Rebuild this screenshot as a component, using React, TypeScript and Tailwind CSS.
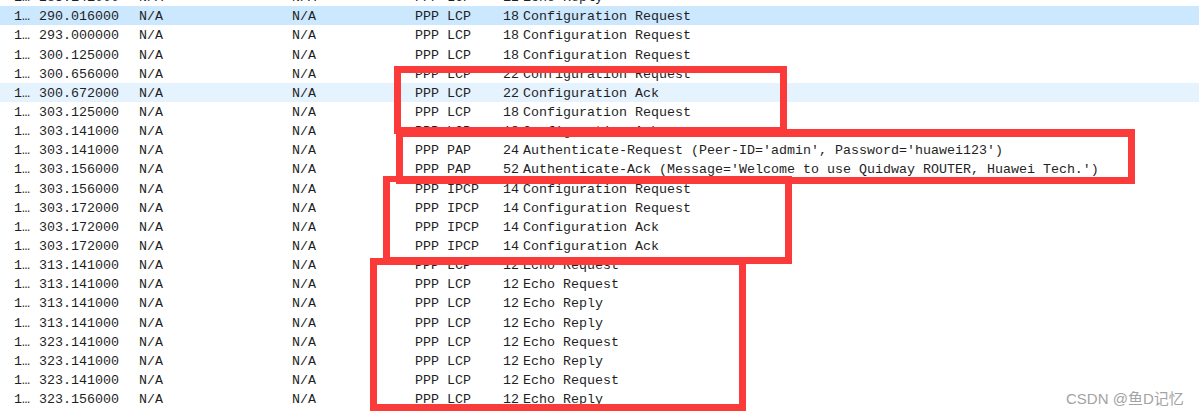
import React from "react";

type Row = { t: string; proto: string; len: string; info: string; bg?: string };

const rows: Row[] = [
  { t: "283.141000", proto: "PPP LCP", len: "12", info: "Echo Reply" },
  { t: "290.016000", proto: "PPP LCP", len: "18", info: "Configuration Request", bg: "bg-[#cce8ff]" },
  { t: "293.000000", proto: "PPP LCP", len: "18", info: "Configuration Request" },
  { t: "300.125000", proto: "PPP LCP", len: "18", info: "Configuration Request" },
  { t: "300.656000", proto: "PPP LCP", len: "22", info: "Configuration Request" },
  { t: "300.672000", proto: "PPP LCP", len: "22", info: "Configuration Ack", bg: "bg-[#e5f3ff]" },
  { t: "303.125000", proto: "PPP LCP", len: "18", info: "Configuration Request" },
  { t: "303.141000", proto: "PPP LCP", len: "18", info: "Configuration Ack" },
  { t: "303.141000", proto: "PPP PAP", len: "24", info: "Authenticate-Request (Peer-ID='admin', Password='huawei123')" },
  { t: "303.156000", proto: "PPP PAP", len: "52", info: "Authenticate-Ack (Message='Welcome to use Quidway ROUTER, Huawei Tech.')" },
  { t: "303.156000", proto: "PPP IPCP", len: "14", info: "Configuration Request" },
  { t: "303.172000", proto: "PPP IPCP", len: "14", info: "Configuration Request" },
  { t: "303.172000", proto: "PPP IPCP", len: "14", info: "Configuration Ack" },
  { t: "303.172000", proto: "PPP IPCP", len: "14", info: "Configuration Ack" },
  { t: "313.141000", proto: "PPP LCP", len: "12", info: "Echo Request" },
  { t: "313.141000", proto: "PPP LCP", len: "12", info: "Echo Request" },
  { t: "313.141000", proto: "PPP LCP", len: "12", info: "Echo Reply" },
  { t: "313.141000", proto: "PPP LCP", len: "12", info: "Echo Reply" },
  { t: "323.141000", proto: "PPP LCP", len: "12", info: "Echo Request" },
  { t: "323.141000", proto: "PPP LCP", len: "12", info: "Echo Reply" },
  { t: "323.141000", proto: "PPP LCP", len: "12", info: "Echo Request" },
  { t: "323.156000", proto: "PPP LCP", len: "12", info: "Echo Reply" },
];

export default function App() {
  return (
    <div className="relative w-[1199px] h-[416px] overflow-hidden bg-white">
      <div
        className="-mt-[12.85px] text-[13.33px] text-[#1f1f1f] whitespace-pre"
        style={{ fontFamily: '"Liberation Mono", "DejaVu Sans Mono", monospace' }}
      >
        {rows.map((r, i) => (
          <div key={i} className={`flex h-[19.15px] leading-[19.15px] pt-[1px] ${r.bg ?? ""}`}>
            <div className="w-[39px] pl-[14px] shrink-0">1…</div>
            <div className="w-[100px] shrink-0">{r.t}</div>
            <div className="w-[153px] shrink-0">N/A</div>
            <div className="w-[123px] shrink-0">N/A</div>
            <div className="w-[72px] shrink-0">{r.proto}</div>
            <div className="w-[32px] shrink-0 text-right">{r.len}</div>
            <div className="pl-[4px]">{r.info}</div>
          </div>
        ))}
      </div>

      {/* annotation boxes */}
      <div className="absolute left-[394px] top-[66px] w-[393px] h-[68px] border-[7px] border-[#fb3a3a]" />
      <div className="absolute left-[396px] top-[129px] w-[739px] h-[55px] border-[7px] border-t-[8px] border-[#fb3a3a]" />
      <div className="absolute left-[383px] top-[176px] w-[409px] h-[88px] border-[7px] border-t-[6px] border-[#fb3a3a]" />
      <div className="absolute left-[370px] top-[258px] w-[376px] h-[153px] border-[7px] border-[#fb3a3a]" />

      <div
        className="absolute left-[1066px] top-[390px] text-[15px] leading-[18px] text-[#a3a3a3]"
        style={{ fontFamily: '"Liberation Sans", "Noto Sans CJK SC", sans-serif' }}
      >
        CSDN @鱼D记忆
      </div>
    </div>
  );
}
